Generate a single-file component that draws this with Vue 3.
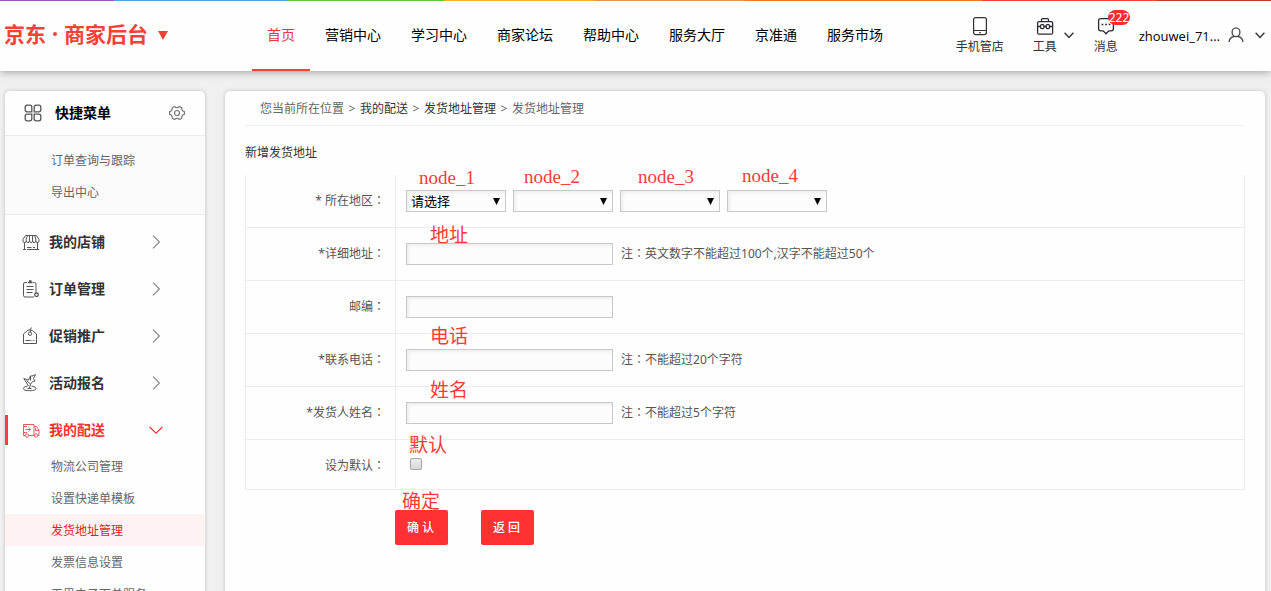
<script setup>
import { ref } from 'vue'

const nav = ['首页', '营销中心', '学习中心', '商家论坛', '帮助中心', '服务大厅', '京准通', '服务市场']
const quickLinks = ['订单查询与跟踪', '导出中心']
const menu = [
  { name: '我的店铺', icon: 'shop' },
  { name: '订单管理', icon: 'order' },
  { name: '促销推广', icon: 'promo' },
  { name: '活动报名', icon: 'activity' },
  { name: '我的配送', icon: 'truck', active: true }
]
const subMenu = ['物流公司管理', '设置快递单模板', '发货地址管理', '发票信息设置', '无界电子面单服务']
const regions = [
  { mark: 'node_1', placeholder: '请选择' },
  { mark: 'node_2', placeholder: '' },
  { mark: 'node_3', placeholder: '' },
  { mark: 'node_4', placeholder: '' }
]
const fields = ref([
  { id: 'address', label: '*详细地址', mark: '地址', note: '英文数字不能超过100个,汉字不能超过50个', value: '' },
  { id: 'zip', label: '邮编', mark: '', note: '', value: '' },
  { id: 'phone', label: '*联系电话', mark: '电话', note: '不能超过20个字符', value: '' },
  { id: 'name', label: '*发货人姓名', mark: '姓名', note: '不能超过5个字符', value: '' }
])
const isDefault = ref(false)
</script>

<template>
  <div class="page">
    <header class="header">
      <div class="stripe"></div>
      <a class="logo" href="#">
        <span>京东</span><i class="dot"></i><span>商家后台</span>
        <svg class="logo-arrow" width="10" height="9" viewBox="0 0 10 9"><path d="M0 0h10L5 9z" fill="currentColor" /></svg>
      </a>
      <nav class="nav">
        <a v-for="(item, i) in nav" :key="item" href="#" :class="{ active: i === 0 }">{{ item }}</a>
      </nav>
      <div class="tools">
        <a class="tool phone" href="#">
          <svg width="18" height="20" viewBox="0 0 18 20" fill="none" stroke="#333" stroke-width="1.2">
            <rect x="2.6" y="1.6" width="12.8" height="17" rx="2" />
            <path d="M3 14.5h12M8.200 16.700h1.600" />
          </svg>
          <span>手机管店</span>
        </a>
        <a class="tool kit" href="#">
          <svg width="18" height="20" viewBox="0 0 18 20" fill="none" stroke="#2b2b35" stroke-width="1.3">
            <rect x="1.600" y="5.600" width="15" height="12.600" rx="1.500" />
            <path d="M5.500 5.500V3.600q0-1 1-1h5q1 0 1 1v1.900M2 10.500h2.500M8 10.500h2M13.500 10.500h2.500" />
            <rect x="4.600" y="8.600" width="3.300" height="4" rx="1" />
            <rect x="10.200" y="8.600" width="3.300" height="4" rx="1" />
          </svg>
          <span>工具</span>
        </a>
        <svg class="chev" width="10" height="7" viewBox="0 0 10 7" fill="none" stroke="#333" stroke-width="1.400"><path d="M.6.8 5 5.400 9.400.8" /></svg>
        <a class="tool msg" href="#">
          <svg width="18" height="20" viewBox="0 0 18 20" fill="none" stroke="#2b2b35" stroke-width="1.300">
            <path d="M3.600 2.600h10.800q2 0 2 2v8.200q0 2-2 2h-2.600L9 17.800l-2.800-3H3.600q-2 0-2-2V4.600q0-2 2-2z" />
            <path d="M4.600 8.500h1.700M8.200 8.500h1.700M11.700 8.500h1.700" stroke-width="1.700" />
          </svg>
          <span>消息</span>
          <b class="badge">222</b>
        </a>
        <span class="user">zhouwei_71...</span>
        <svg class="avatar" width="16" height="16" viewBox="0 0 16 16" fill="none" stroke="#444" stroke-width="1.300">
          <ellipse cx="8" cy="5.300" rx="3.900" ry="4.400" />
          <path d="M1 15c.4-3 2.300-5 5-5.500M15 15c-.4-3-2.300-5-5-5.500" />
        </svg>
        <svg class="chev last" width="10" height="7" viewBox="0 0 10 7" fill="none" stroke="#333" stroke-width="1.400"><path d="M.6.8 5 5.400 9.400.8" /></svg>
      </div>
    </header>

    <div class="body">
      <aside class="side">
        <div class="side-head">
          <svg width="18" height="18" viewBox="0 0 18 18" fill="none" stroke="#555" stroke-width="1.300">
            <path d="M3.200 1.200h2.600q2 0 2 2v4.600H3.200q-2 0-2-2V3.200q0-2 2-2zM12.200 1.200h2.600q2 0 2 2v2.600q0 2-2 2h-4.600V3.200q0-2 2-2zM3.200 10.200h4.600v4.600q0 2-2 2H3.200q-2 0-2-2v-2.600q0-2 2-2zM10.200 10.200h4.600q2 0 2 2v2.600q0 2-2 2h-2.600q-2 0-2-2z" />
          </svg>
          <strong>快捷菜单</strong>
          <svg class="gear" width="16" height="16" viewBox="0 0 16 16" fill="none" stroke="#777" stroke-width="1.200" stroke-linejoin="round">
            <path d="M5.500 1.500Q8 3.800 10.500 1.500L12.800 2.800Q12.500 6.200 15.400 6.700v2.600Q12.500 9.800 12.800 13.200L10.500 14.500Q8 12.200 5.500 14.500L3.200 13.200Q3.500 9.800.6 9.300V6.700Q3.500 6.200 3.200 2.800z" />
            <circle cx="8" cy="8" r="2.500" />
          </svg>
        </div>
        <ul class="sub quick">
          <li v-for="q in quickLinks" :key="q"><a href="#">{{ q }}</a></li>
        </ul>
        <ul class="menu">
          <li v-for="m in menu" :key="m.name">
            <a href="#" :class="{ active: m.active }">
              <svg class="mi" width="18" height="18" viewBox="0 0 18 18" fill="none" stroke="currentColor" stroke-width="1">
                <template v-if="m.icon === 'shop'">
                  <path d="M3.500 2.500h11l2.500 4v1.500q0 1.500-1.600 1.500T13.800 8q0 1.500-1.600 1.500T10.600 8q0 1.500-1.600 1.500T7.400 8q0 1.500-1.600 1.500T4.200 8q0 1.500-1.600 1.500T1 8V6.500zM4.200 8V6l1.300-3.500M7.400 8l.2-5.500M10.600 8l-.2-5.500M13.800 8V6l-1.300-3.500M2.500 9.500v7M15.500 9.500v7M1 16.500h3M5 14.500h4.500M11 14.500h2M5 16.500h12" />
                </template>
                <template v-else-if="m.icon === 'order'">
                  <path d="M5 2.500H3q-1.500 0-1.500 1.500v11.500q0 1.500 1.500 1.500h9M11 2.500h1.500q1.500 0 1.500 1.500v8.500M4.500 6.500h7M4.500 9.500h7M4.500 12.500h6" />
                  <path d="M6 2.500h4.500M7 1h2.500" stroke-width="1.600" />
                  <circle cx="14.500" cy="14.800" r="1.800" stroke-width="1.300" />
                </template>
                <template v-else-if="m.icon === 'promo'">
                  <path d="M5.500 3.500 1.500 7v9.500h13V7l-4-3.500q-2.500-1.500-5 0zM3.500 13.500h5M9.500 13.500h1M11.500 13.500h1M8.500 5Q7.500 2.500 9.500.5" />
                  <circle cx="8" cy="6.700" r="1.700" />
                </template>
                <template v-else-if="m.icon === 'activity'">
                  <path d="M6.500 12 1.800 4.500 6.500 6 8.500 2q2.500.5 5-1.500L11.500 4.500l1.500 2.500q-4.500 0-5.500 7M4.500 6.500l4 3.500M8.500 2v4.500M5.500 12q-4 .6-4 2.500 0 2.200 6.200 2.200t6.300-2.200q0-1.900-4.500-2.500" />
                  <path d="M5.500 14.500h4" />
                </template>
                <template v-else>
                  <path d="M3 14.500H1.500v-11h10.500v11M7 14.500h5M12 5.500h2.500L17 9v5.500h-1.200M13.500 7v2.500H17M1.500 5.500H5M3.500 8.500H8M6.500 6.300 8.800 8.500 6.500 10.700M1.500 11.500H5" />
                  <circle cx="5" cy="14.500" r="1.700" />
                  <circle cx="14" cy="14.500" r="1.700" />
                </template>
              </svg>
              <strong>{{ m.name }}</strong>
              <svg v-if="m.active" class="arr" width="14" height="14" viewBox="0 0 14 14" fill="none" stroke="currentColor" stroke-width="1.200"><path d="M.6 4 7 10.200 13.400 4" /></svg>
              <svg v-else class="arr" width="14" height="14" viewBox="0 0 14 14" fill="none" stroke="#888" stroke-width="1.200"><path d="M4 .6 10.400 7 4 13.400" /></svg>
            </a>
          </li>
        </ul>
        <ul class="sub">
          <li v-for="(s, i) in subMenu" :key="s" :class="{ current: i === 2 }"><a href="#">{{ s }}</a></li>
        </ul>
      </aside>

      <main class="main">
        <div class="crumbs">
          <span>您当前所在位置</span><i>&gt;</i><a href="#">我的配送</a><i>&gt;</i><a href="#">发货地址管理</a><i>&gt;</i><span>发货地址管理</span>
        </div>
        <h1>新增发货地址</h1>
        <form @submit.prevent>
          <div class="rows">
            <div class="row">
              <label class="label" for="region0">* 所在地区<span class="colon">：</span></label>
              <div class="cell regions">
                <div v-for="(r, i) in regions" :key="r.mark" class="select">
                  <em :class="['mark', 'n' + i]">{{ r.mark }}</em>
                  <select :id="'region' + i" :aria-label="'所在地区 ' + (i + 1)"><option>{{ r.placeholder }}</option></select>
                  <svg width="7" height="7" viewBox="0 0 7 7"><path d="M0 0h7L3.500 7z" /></svg>
                </div>
              </div>
            </div>
            <div v-for="f in fields" :key="f.id" class="row">
              <label class="label" :for="f.id">{{ f.label }}<span class="colon">：</span></label>
              <div class="cell">
                <em v-if="f.mark" :class="['mark', 'over', f.id]">{{ f.mark }}</em>
                <input :id="f.id" v-model="f.value" class="text" type="text">
                <span v-if="f.note" class="note">注<span class="colon">：</span>{{ f.note }}</span>
              </div>
            </div>
            <div class="row short">
              <label class="label" for="isDefault">设为默认<span class="colon">：</span></label>
              <div class="cell">
                <em class="mark default">默认</em>
                <input id="isDefault" v-model="isDefault" class="check" type="checkbox">
              </div>
            </div>
          </div>
          <div class="actions">
            <em class="mark confirm">确定</em>
            <button type="submit">确 认</button>
            <button type="button">返 回</button>
          </div>
        </form>
      </main>
    </div>
  </div>
</template>

<style>
body { background: #f0f0f0; }
</style>

<style scoped>
.page {
  height: 100vh;
  overflow: hidden;
  background: #f0f0f0;
  font: 12px/20px "Noto Sans", "Noto Sans CJK SC", sans-serif;
  color: #333;
}
.page * { box-sizing: border-box; }
a { color: inherit; text-decoration: none; }
ul { list-style: none; margin: 0; padding: 0; }
i, em { font-style: normal; }
svg { flex: none; display: block; }
.colon { font-family: "Noto Sans CJK TC", sans-serif; }

.header {
  position: relative;
  display: flex;
  height: 71px;
  background: #fefefe;
  box-shadow: 0 1px 8px rgba(0, 0, 0, .35);
}
.stripe {
  position: absolute;
  inset: 0 0 auto;
  height: 1px;
  background: linear-gradient(90deg, #9b59b6 9%, #4fa5e3 9% 22.600%, #63c53a 22.600% 34.900%, #f6b024 34.900% 46.700%, #e8924c 46.700% 58.600%, #e67e22 58.600% 77.300%, #f44336 77.300% 91%, #c0392b 91%);
}
.logo {
  display: flex;
  align-items: center;
  width: 252px;
  padding: 0 0 3px 4px;
  color: #f44336;
  font-size: 21px;
  font-weight: 700;
}
.dot { width: 4px; height: 4px; margin: 0 7px; border-radius: 50%; background: #f44336; }
.logo-arrow { margin: 2px 0 0 10px; }
.nav { display: flex; flex: 1; color: #000; font-size: 14px; }
.nav a { padding: 0 15px; line-height: 70px; white-space: nowrap; }
.nav .active { color: #e4393c; border-bottom: 2px solid #f44336; }
.tools { display: flex; align-items: flex-start; padding-right: 6px; }
.tool {
  position: relative;
  display: flex;
  flex-direction: column;
  align-items: center;
  gap: 1px;
  padding-top: 16px;
}
.kit { margin-left: 29px; }
.msg { margin-left: 20px; }
.chev { margin: 32px 0 0 7px; }
.badge {
  position: absolute;
  left: 14px;
  top: 10px;
  padding: 0 1px;
  height: 15px;
  border-radius: 8px;
  background: #ff2b34;
  color: #fff;
  font-size: 12px;
  font-weight: 400;
  line-height: 15px;
}
.user { margin: 26px 0 0 21px; color: #000; font-family: "Open Sans", sans-serif; font-size: 13px; }
.avatar { margin: 27px 0 0 8px; }
.chev.last { margin-left: 11px; }

.body { display: flex; align-items: flex-start; gap: 20px; padding: 20px 6px 0 5px; }
.side, .main { border-radius: 5px; background: #fefefe; box-shadow: 0 0 4px rgba(0, 0, 0, .2); }
.side { flex: none; width: 200px; }
.side-head {
  display: flex;
  align-items: center;
  height: 45px;
  padding: 0 20px 0 19px;
  border-bottom: 1px solid #ececec;
}
.side-head strong { margin-left: 13px; color: #000; font-size: 14px; }
.gear { margin-left: auto; }
.sub li { height: 32px; padding-left: 46px; color: #666; line-height: 33px; }
.sub .current { background: #fff2f3; color: #e01f1f; }
.quick { padding: 8px 0 6px; border-bottom: 1px solid #ececec; background: #fafafa; }
.menu { display: grid; gap: 17px; padding: 12px 0 5px; }
.menu a {
  display: flex;
  align-items: center;
  height: 30px;
  padding-left: 14px;
  border-left: 3px solid transparent;
}
.menu .mi { color: #555; }
.menu strong { margin-left: 9px; font-size: 14px; }
.menu .arr { margin-left: 44px; }
.menu .active { border-color: #f44336; color: #ff3131; }
.menu .active .mi { color: #e0605a; }

.main { flex: 1; min-width: 0; min-height: 560px; padding: 0 20px; }
.crumbs {
  display: flex;
  height: 35px;
  padding-left: 15px;
  border-bottom: 1px solid #f0f0f0;
  line-height: 35px;
  color: #666;
}
.crumbs i { width: 16px; text-align: center; }
.crumbs a { color: #333; }
h1 { margin: 17px 0 12px; font-size: 12px; font-weight: 400; line-height: 20px; }
.rows { border: 1px solid #ececec; border-width: 0 1px; }
.row { display: flex; height: 53px; border-bottom: 1px solid #ececec; color: #555; }
.row.short { height: 50px; }
.label {
  width: 150px;
  flex: none;
  padding: 15px 10px 0 0;
  border-right: 1px solid #ececec;
  text-align: right;
}
.cell { position: relative; flex: 1; display: flex; align-items: flex-start; padding: 15px 10px; }
.regions { gap: 7px; }
.select { position: relative; width: 100px; }
.select svg { position: absolute; right: 6px; top: 8px; pointer-events: none; }
select, .text {
  display: block;
  height: 22px;
  margin: 0;
  border: 1px solid #c8c8c8;
  border-radius: 0;
  background: #fcfcfc;
  box-shadow: inset 2px 2px 3px #eee;
  outline: 0;
}
select {
  appearance: none;
  width: 100%;
  padding: 0 4px;
  color: #000;
  font: 13px/20px "Noto Sans", "Noto Sans CJK SC", sans-serif;
}
.text { width: 207px; padding: 0 4px; font: inherit; }
.note { margin-left: 8px; }
.check {
  appearance: none;
  width: 12px;
  height: 12px;
  margin: 3px 4px;
  border: 1px solid #a6a6a6;
  border-radius: 2px;
  background: linear-gradient(#ececec, #d9d9d9);
}
.mark {
  position: absolute;
  z-index: 1;
  color: #fb3a3a;
  font: 19px/20px "Liberation Serif", "Noto Sans CJK SC", serif;
  white-space: nowrap;
  pointer-events: none;
}
.n0 { left: 13px; top: -22px; }
.n1 { left: 11px; top: -23px; }
.n2 { left: 18px; top: -23px; }
.n3 { left: 15px; top: -24px; }
.over { left: 34px; }
.address { top: -2px; }
.phone.over { top: -7px; }
.name { top: -6px; }
.default { left: 13px; top: -4px; }
.actions { position: relative; display: flex; gap: 33px; padding: 20px 0 0 150px; }
.confirm { left: 157px; top: 2px; }
button {
  width: 53px;
  height: 35px;
  padding: 0 2px 0 0;
  border: 0;
  border-radius: 2px;
  background: #ff3131;
  color: #fff;
  font: 500 12px/20px "Noto Sans", "Noto Sans CJK SC", sans-serif;
}
</style>
